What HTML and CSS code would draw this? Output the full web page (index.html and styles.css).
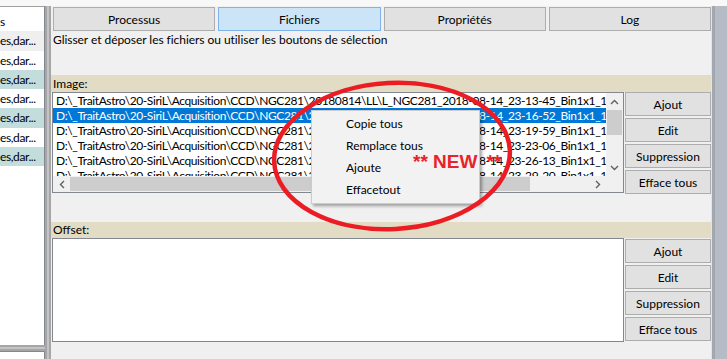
FILE: index.html
```html
<!DOCTYPE html>
<html lang="fr">
<head>
<meta charset="utf-8">
<title>Fichiers</title>
<link rel="stylesheet" href="styles.css">
</head>
<body>
<div class="topstrip"></div>
<div class="frame">
  <div class="leftcol">
    <div class="lpanel">
      <div class="lrow first">s</div>
      <div class="lrow gray">es,dar...</div>
      <div class="lrow">es,dar...</div>
      <div class="lrow teal">es,dar...</div>
      <div class="lrow">es,dar...</div>
      <div class="lrow teal">es,dar...</div>
      <div class="lrow">es,dar...</div>
      <div class="lrow teal">es,dar...</div>
    </div>
    <div class="hsplit"></div>
    <div class="lbottom"></div>
  </div>
  <div class="vsplit"></div>
  <div class="main">
    <div class="tabs">
      <div class="tab">Processus</div>
      <div class="tab active">Fichiers</div>
      <div class="tab">Propriétés</div>
      <div class="tab">Log</div>
    </div>
    <div class="hint">Glisser et déposer les fichiers ou utiliser les boutons de sélection</div>
    <div class="band">Image:</div>
    <div class="grp">
      <div class="list list1">
        <div class="rows">
          <div class="item">D:\_TraitAstro\20-SiriL\Acquisition\CCD\NGC281\20180814\LL\L_NGC281_2018-08-14_23-13-45_Bin1x1_1s_Lum.fit</div>
          <div class="item sel">D:\_TraitAstro\20-SiriL\Acquisition\CCD\NGC281\20180814\LL\L_NGC281_2018-08-14_23-16-52_Bin1x1_1s_Lum.fit</div>
          <div class="item">D:\_TraitAstro\20-SiriL\Acquisition\CCD\NGC281\20180814\LL\L_NGC281_2018-08-14_23-19-59_Bin1x1_1s_Lum.fit</div>
          <div class="item">D:\_TraitAstro\20-SiriL\Acquisition\CCD\NGC281\20180814\LL\L_NGC281_2018-08-14_23-23-06_Bin1x1_1s_Lum.fit</div>
          <div class="item">D:\_TraitAstro\20-SiriL\Acquisition\CCD\NGC281\20180814\LL\L_NGC281_2018-08-14_23-26-13_Bin1x1_1s_Lum.fit</div>
          <div class="item">D:\_TraitAstro\20-SiriL\Acquisition\CCD\NGC281\20180814\LL\L_NGC281_2018-08-14_23-29-20_Bin1x1_1s_Lum.fit</div>
        </div>
        <div class="vscroll">
          <div class="sbtn"><svg width="9" height="6" viewBox="0 0 9 6"><polyline points="1,5 4.5,1.5 8,5" class="chev"/></svg></div>
          <div class="vthumb"></div>
          <div class="sbtn end"><svg width="9" height="6" viewBox="0 0 9 6"><polyline points="1,1 4.5,4.5 8,1" class="chev"/></svg></div>
        </div>
        <div class="hscroll">
          <div class="sbtn h"><svg width="6" height="9" viewBox="0 0 6 9"><polyline points="5,1 1.5,4.5 5,8" class="chev"/></svg></div>
          <div class="hthumb"></div>
          <div class="sbtn h end"><svg width="6" height="9" viewBox="0 0 6 9"><polyline points="1,1 4.5,4.5 1,8" class="chev"/></svg></div>
        </div>
        <div class="corner"></div>
      </div>
      <div class="btns">
        <div class="btn">Ajout</div>
        <div class="btn">Edit</div>
        <div class="btn">Suppression</div>
        <div class="btn">Efface tous</div>
      </div>
    </div>
    <div class="band offset">Offset:</div>
    <div class="grp">
      <div class="list list2"></div>
      <div class="btns b2">
        <div class="btn">Ajout</div>
        <div class="btn">Edit</div>
        <div class="btn">Suppression</div>
        <div class="btn">Efface tous</div>
      </div>
    </div>
  </div>
  <div class="rightbar"></div>
</div>

<div class="menu">
  <div class="mitem">Copie tous</div>
  <div class="mitem">Remplace tous</div>
  <div class="mitem">Ajoute</div>
  <div class="mitem">Effacetout</div>
</div>
<div class="newtag"><span>** NEW</span><span class="tail">**</span></div>
<svg class="ring" width="727" height="359" viewBox="0 0 727 359">
  <ellipse cx="392" cy="156" rx="118" ry="73" transform="rotate(-3 392 156)"/>
</svg>
</body>
</html>
```

FILE: styles.css
```css
* { box-sizing: border-box; }

body {
  margin: 0;
  width: 727px;
  height: 359px;
  overflow: hidden;
  position: relative;
  background: #f0f0f0;
  font-family: Lato, "Liberation Sans", sans-serif;
  font-size: 12px;
  color: #000;
}

.topstrip { height: 6px; background: #f8f8f8; }

.frame { display: flex; height: 353px; }

/* left panel */
.leftcol { width: 45px; display: flex; flex-direction: column; }
.lpanel {
  flex: 1;
  background: #fff;
  border-top: 1px solid #a0a0a0;
  border-right: 1px solid #828790;
  padding-top: 5px;
  overflow: hidden;
}
.lrow { height: 19.3px; line-height: 19px; white-space: nowrap; overflow: hidden; letter-spacing: -0.4px; }
.lrow.gray { background: #efefef; }
.lrow.teal { background: #c3dddd; }
.hsplit {
  height: 6px;
  background: linear-gradient(180deg, #a6a6a6 0 2px, #c4c4c4 2px 4px, #a6a6a6 4px 6px);
}
.lbottom { height: 8px; background: #fff; border-top: 1px solid #828790; border-right: 1px solid #828790; }

.vsplit {
  width: 6px;
  background: linear-gradient(90deg, #a6a6a6 0 2px, #c4c4c4 2px 4px, #a6a6a6 4px 6px);
}

/* main */
.main { width: 660px; padding-top: 1px; display: flex; flex-direction: column; }

.tabs { display: flex; gap: 3px; margin-left: 2px; height: 24px; }
.tab {
  flex: 1;
  border: 1px solid #adadad;
  background: #e1e1e1;
  display: flex;
  align-items: center;
  justify-content: center;
}
.tab.active { background: #cce4f7; border-color: #7eb4ea; }

.hint { height: 44px; padding: 1px 0 0 2px; line-height: 16px; letter-spacing: -0.05px; }

.band { height: 17px; background: #e2dcc4; padding-left: 2px; line-height: 17px; }
.band.offset { margin-top: 28px; height: 16px; line-height: 16px; }

.grp { display: flex; align-items: flex-start; }

.list { margin-left: 1px; width: 572px; border: 1px solid #828790; background: #fff; }
.list1 {
  height: 101px;
  display: grid;
  grid-template-columns: 1fr 17px;
  grid-template-rows: 1fr 16px;
}
.list2 { height: 104px; }

.rows { overflow: hidden; }
.item { height: 15px; line-height: 15px; padding-left: 3px; white-space: nowrap; letter-spacing: -0.4px; }
.item.sel { background: #0078d7; color: #fff; }

.vscroll { background: #f0f0f0; display: flex; flex-direction: column; }
.hscroll { background: #f0f0f0; display: flex; }
.corner { background: #f0f0f0; }
.sbtn { height: 17px; display: flex; align-items: center; justify-content: center; }
.sbtn.h { height: auto; width: 17px; }
.sbtn.end { margin-top: auto; }
.sbtn.h.end { margin-top: 0; margin-left: auto; }
.vthumb { height: 25px; margin: 0 1px; background: #cdcdcd; }
.hthumb { width: 460px; margin: 1px 0; background: #cdcdcd; }
.chev { fill: none; stroke: #606060; stroke-width: 1.4; }

.btns { margin-left: 1px; width: 86px; display: flex; flex-direction: column; gap: 2px; }
.btns.b2 { margin-top: 1px; }
.btn {
  height: 24px;
  border: 1px solid #adadad;
  background: #e1e1e1;
  display: flex;
  align-items: center;
  justify-content: center;
}

.rightbar {
  width: 16px;
  background: linear-gradient(90deg, #e4e4e4 0 1px, #a3a8b0 1px 4px, #b6bcc6 4px);
}

/* overlays */
.menu {
  position: absolute;
  left: 311px;
  top: 110px;
  width: 169px;
  height: 94px;
  padding: 2px 0;
  background: #f2f2f2;
  border: 1px solid #cccccc;
  box-shadow: 2px 2px 3px rgba(0, 0, 0, 0.35);
}
.mitem { height: 22px; line-height: 22px; padding-left: 34px; }

.newtag {
  position: absolute;
  left: 413px;
  top: 152px;
  font-family: "Liberation Sans", Arial, sans-serif;
  font-weight: bold;
  font-size: 19px;
  line-height: 19px;
  color: #ea2229;
  white-space: nowrap;
}
.newtag .tail { margin-left: 9px; }

.ring { position: absolute; left: 0; top: 0; pointer-events: none; }
.ring ellipse { fill: none; stroke: #ec1c24; stroke-width: 4.5; }
```
